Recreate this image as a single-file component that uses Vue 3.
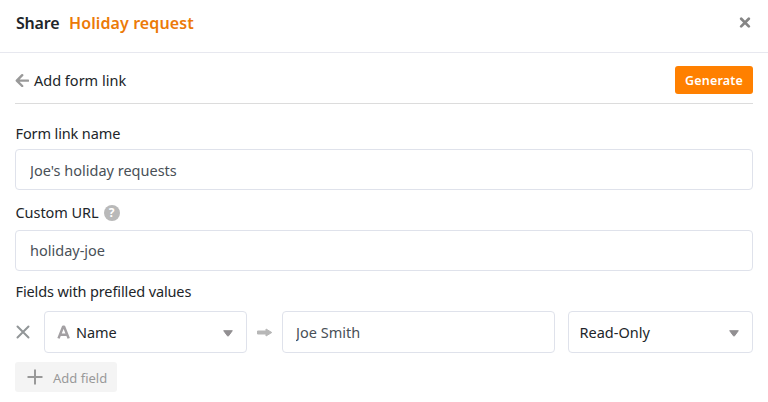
<script setup>
import { ref } from 'vue'

const linkName = ref("Joe's holiday requests")
const customUrl = ref('holiday-joe')
const prefilled = ref('Joe Smith')
</script>

<template>
  <main class="dialog">
    <header class="header">
      <h1 class="title"><span class="share">Share</span><span class="form-name">Holiday request</span></h1>
      <button class="icon-button">
        <svg width="12" height="12" viewBox="0 0 12 12"><path d="M2.2 1.8l7.6 7.6M9.8 1.8l-7.6 7.6" fill="none" stroke="#858585" stroke-width="2.7" stroke-linecap="round" /></svg>
      </button>
    </header>
    <div class="content">
      <div class="toolbar">
        <div class="back">
          <svg width="14" height="14" viewBox="0 0 14 14"><path d="M7.2 2.2L1.8 7.6L7.2 13M2.4 7.6H13" fill="none" stroke="#999" stroke-width="2.4" stroke-linecap="round" stroke-linejoin="round" /></svg>
          <span>Add form link</span>
        </div>
        <button class="generate">Generate</button>
      </div>
      <div class="label first">Form link name</div>
      <input v-model="linkName" class="field" />
      <div class="label second">
        <span class="url-label">Custom URL</span>
        <span class="help">?</span>
      </div>
      <input v-model="customUrl" class="field url" />
      <div class="label third">Fields with prefilled values</div>
      <div class="row">
        <svg class="remove" width="14" height="14" viewBox="0 0 14 14"><path d="M1.5 1.5l11 11M12.5 1.5l-11 11" fill="none" stroke="#929698" stroke-width="2" stroke-linecap="round" /></svg>
        <div class="select name-select">
          <svg width="14" height="15" viewBox="0 0 14 15"><path d="M1.5 13.4L6.1 1.8H7.1L11.7 13.4M3.2 9.8H10" fill="none" stroke="#a3a0a3" stroke-width="2.5" stroke-linejoin="round" /></svg>
          <span>Name</span>
          <svg class="caret" width="10" height="7" viewBox="0 0 10 7"><path d="M.7.7H9.3L5.7 5.7Q5 6.6 4.3 5.7Z" fill="#928f92" stroke="#928f92" stroke-linejoin="round" /></svg>
        </div>
        <svg class="arrow" width="17" height="9" viewBox="0 0 17 9"><path d="M1.5 3H10V1L15.8 4.5L10 8V6H1.5Z" fill="#b7b7b7" stroke="#b7b7b7" stroke-linejoin="round" /></svg>
        <input v-model="prefilled" class="field prefill" />
        <div class="select access-select">
          <span>Read-Only</span>
          <svg class="caret" width="10" height="7" viewBox="0 0 10 7"><path d="M.7.7H9.3L5.7 5.7Q5 6.6 4.3 5.7Z" fill="#928f92" stroke="#928f92" stroke-linejoin="round" /></svg>
        </div>
      </div>
      <button class="add">
        <svg width="16" height="16" viewBox="0 0 16 16"><path d="M8 .5V15.5M.5 8H15.5" stroke="#999" stroke-width="2" /></svg>
        <span>Add field</span>
      </button>
    </div>
  </main>
</template>

<style>
body { background: #fff; }
</style>

<style scoped>
* { box-sizing: border-box; }
.dialog {
  height: 402px;
  font: 14.5px/20px "Noto Sans", "Open Sans", sans-serif;
  color: #212529;
  overflow: hidden;
}
button { border: 0; padding: 0; font-family: inherit; }
svg { display: block; flex: none; }
.header {
  height: 53px;
  padding: 0 17px 7px 15px;
  border-bottom: 1px solid #e7e8ef;
  display: flex;
  align-items: center;
  justify-content: space-between;
}
.title {
  display: flex;
  gap: 8px;
  margin: 0;
  font-size: 16px;
  line-height: 22px;
  font-weight: 600;
  white-space: nowrap;
}
.share { width: 46px; padding-left: 1px; letter-spacing: -.2px; }
.form-name { color: #ec7a08; letter-spacing: .1px; }
.icon-button { background: none; }
.content { padding: 0 15px; }
.toolbar {
  height: 51px;
  padding-top: 4px;
  border-bottom: 1px solid #dcdcdc;
  display: flex;
  align-items: center;
  justify-content: space-between;
}
.back { display: flex; align-items: center; gap: 5px; }
.generate {
  width: 78px;
  height: 28px;
  border-radius: 3px;
  background: #ff8000;
  color: #fff;
  font-size: 12.5px;
  font-weight: 600;
  letter-spacing: .2px;
  line-height: 26px;
  padding-top: 2px;
}
.label {
  display: flex;
  align-items: center;
  height: 20px;
  padding-left: .5px;
  letter-spacing: -.12px;
  white-space: nowrap;
}
.first { margin: 19px 0 6px; }
.second { margin: 13px 0 7px; gap: 5px; }
.third { margin: 10px 0 10px; }
.url-label { padding-bottom: 2px; letter-spacing: -.05px; }
.help {
  width: 16px;
  height: 16px;
  border-radius: 50%;
  background: #b9b9b9;
  color: #fff;
  font-size: 12px;
  line-height: 16px;
  font-weight: 700;
  text-align: center;
  letter-spacing: 0;
}
.field, .select {
  border: 1px solid #dfe2eb;
  border-radius: 4px;
  background: #fff;
}
.field {
  display: block;
  width: 100%;
  height: 41px;
  padding: 0 14px;
  color: #495057;
  font: inherit;
  outline: 0;
}
.url { padding-bottom: 1px; }
.row { display: flex; align-items: center; height: 42px; }
.remove { margin: 0 14px 0 1px; }
.select { display: flex; align-items: center; height: 42px; }
.name-select { width: 203px; padding: 0 13px 0 12px; gap: 5px; }
.name-select span { letter-spacing: -.1px; }
.caret { margin: 2px 0 0 auto; }
.arrow { margin: 1px 9px 0; }
.row .prefill { flex: none; width: 273px; height: 42px; padding-left: 13px; }
.access-select { width: 185px; margin-left: 13px; padding: 0 13px 0 10.5px; }
.add {
  width: 102px;
  height: 30px;
  margin-top: 9px;
  padding: 0 10px 0 12px;
  border-radius: 3px;
  background: #f4f4f4;
  color: #999;
  display: flex;
  align-items: center;
  gap: 10px;
  font-size: 13px;
  line-height: 20px;
  white-space: nowrap;
}
.add span { padding-top: 2px; }
</style>
